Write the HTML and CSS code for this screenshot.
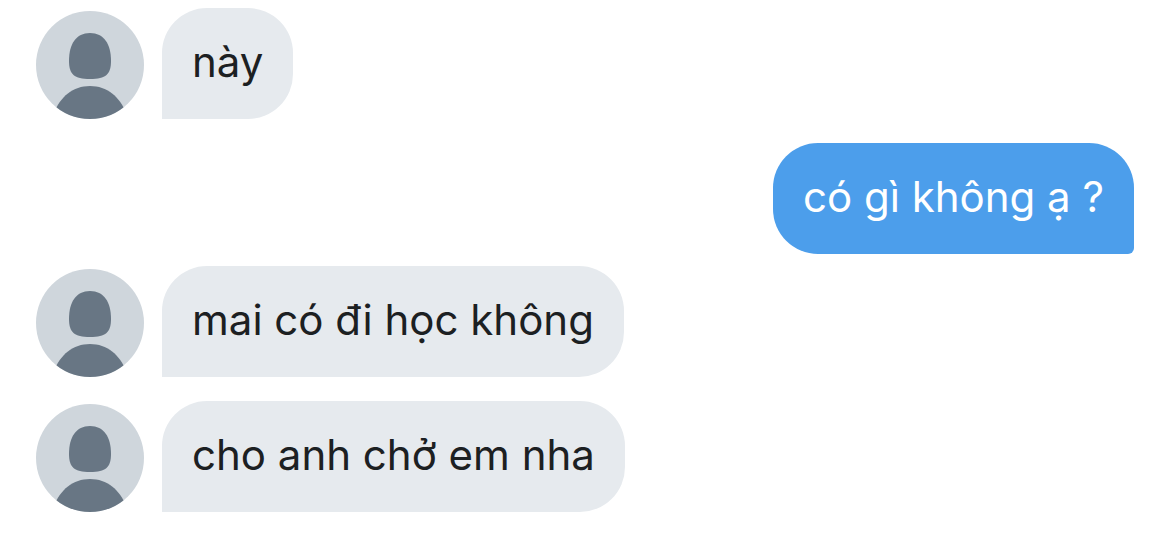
FILE: index.html
```html
<!DOCTYPE html>
<html lang="vi">
<head>
    <meta charset="UTF-8">
    <meta name="viewport" content="width=device-width, initial-scale=1.0">
    <title>Tin nhắn</title>
    <link rel="stylesheet" href="styles.css">
</head>
<body>

    <svg class="sprite" aria-hidden="true">
        <symbol id="avatar" viewBox="0 0 108 108">
            <clipPath id="avatarClip"><circle cx="54" cy="54" r="54"/></clipPath>
            <g clip-path="url(#avatarClip)">
                <rect width="108" height="108" fill="#cfd6dc"/>
                <path d="M54 22C68 22 75 33 75 50C75 63 70 68 54 68C38 68 33 63 33 50C33 33 40 22 54 22Z" fill="#687684"/>
                <path d="M18 102C24 86 37 75 54 75C71 75 84 86 90 102V108H18Z" fill="#687684"/>
            </g>
        </symbol>
    </svg>

    <main class="chat">
        <div class="message received">
            <svg class="avatar" aria-hidden="true"><use href="#avatar"/></svg>
            <p class="bubble">này</p>
        </div>
        <div class="message sent">
            <p class="bubble">có gì không ạ ?</p>
        </div>
        <div class="message received after-reply">
            <svg class="avatar" aria-hidden="true"><use href="#avatar"/></svg>
            <p class="bubble">mai có đi học không</p>
        </div>
        <div class="message received">
            <svg class="avatar" aria-hidden="true"><use href="#avatar"/></svg>
            <p class="bubble">cho anh chở em nha</p>
        </div>
    </main>

</body>
</html>
```
FILE: styles.css
```css
body {
    margin: 0;
    background-color: #fff;
    font-family: Inter, "Noto Sans", sans-serif;
}
.sprite {
    display: block;
    width: 0;
    height: 0;
}
.chat {
    display: flex;
    flex-direction: column;
    gap: 24px;
    padding: 8px 36px;
}
.message {
    display: flex;
    align-items: flex-end;
    gap: 18px;
}
.after-reply {
    margin-top: -12px;
}
.avatar {
    flex: none;
    width: 108px;
    height: 108px;
}
.bubble {
    margin: 0;
    padding: 28px 30px 32px;
    border-radius: 45px;
    font-size: 42px;
    line-height: 51px;
}
.received .bubble {
    border-bottom-left-radius: 0;
    background-color: #e6eaee;
    color: #1c2022;
}
.sent {
    justify-content: flex-end;
}
.sent .bubble {
    border-bottom-right-radius: 6px;
    background-color: #4c9eeb;
    color: #fff;
}
```
